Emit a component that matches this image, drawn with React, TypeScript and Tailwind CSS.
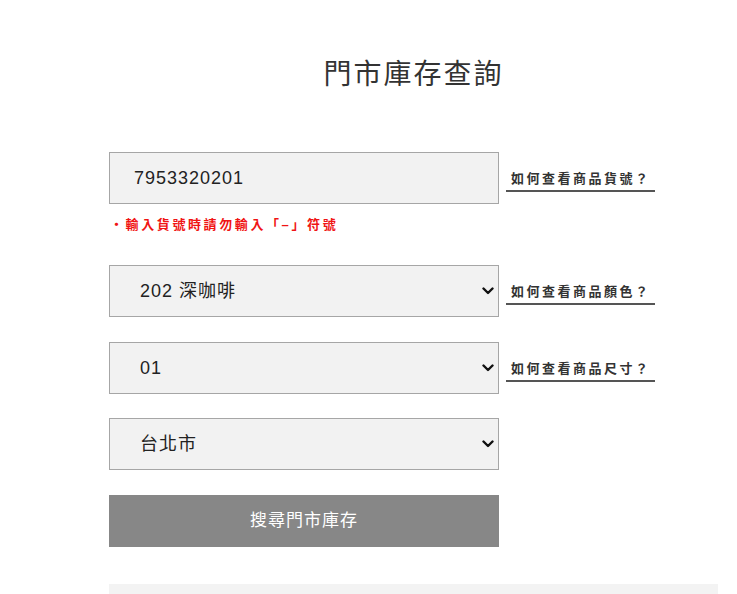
import React from 'react';

const FONT = '"Liberation Sans", "Noto Sans CJK TC", sans-serif';

function Chevron() {
  return (
    <svg
      width="12"
      height="8"
      viewBox="0 0 12 8"
      className="pointer-events-none absolute right-[5px] top-1/2 -translate-y-1/2"
    >
      <polyline points="1.5,1.5 6,6 10.5,1.5" fill="none" stroke="#111" strokeWidth="2.4" strokeLinejoin="round" strokeLinecap="round" />
    </svg>
  );
}

function HelpLink({ label }: { label: string }) {
  return (
    <a
      href="#"
      className="ml-[7px] mt-[6px] border-b-2 border-[#555] pl-[5px] pr-[4px] pb-[2px] text-[13px] font-bold leading-[18px] tracking-[2.5px] text-[#333]"
    >
      {label}
    </a>
  );
}

function SelectField({ value, options }: { value: string; options: string[] }) {
  return (
    <div className="relative h-[52px] w-[390px]">
      <select
        defaultValue={value}
        className="h-full w-full appearance-none border border-[#a6a6a6] bg-[#f2f2f2] pl-[30px] text-[18px] tracking-[1px] text-[#222] outline-none"
        style={{ fontFamily: FONT }}
      >
        {options.map((o) => (
          <option key={o} value={o}>
            {o}
          </option>
        ))}
      </select>
      <Chevron />
    </div>
  );
}

export default function App() {
  return (
    <div className="min-h-[594px] bg-white" style={{ fontFamily: FONT }}>
      <div className="ml-[109px] w-[609px] pt-[55px]">
        <h1 className="text-center text-[28px] leading-[40px] tracking-[2px] text-[#333]">門市庫存查詢</h1>

        <div className="mt-[57px] flex items-center">
          <input
            defaultValue="7953320201"
            className="h-[52px] w-[390px] border border-[#a6a6a6] bg-[#f2f2f2] pl-[24px] text-[18px] tracking-[1px] text-[#222] outline-none"
            style={{ fontFamily: FONT }}
          />
          <HelpLink label="如何查看商品貨號？" />
        </div>

        <p className="ml-[1px] mt-[11px] text-[13px] font-bold leading-[20px] tracking-[2.6px] text-[#f01414]">
          ・輸入貨號時請勿輸入「–」符號
        </p>

        <div className="mt-[30px] flex items-center">
          <SelectField value="202 深咖啡" options={['202 深咖啡', '101 黑色', '301 米白']} />
          <HelpLink label="如何查看商品顏色？" />
        </div>

        <div className="mt-[25px] flex items-center">
          <SelectField value="01" options={['01', '02', '03']} />
          <HelpLink label="如何查看商品尺寸？" />
        </div>

        <div className="mt-[24px] flex items-center">
          <SelectField value="台北市" options={['台北市', '新北市', '桃園市', '台中市', '高雄市']} />
        </div>

        <button className="mt-[25px] h-[52px] w-[390px] bg-[#878787] text-[17px] tracking-[1px] text-white">
          搜尋門市庫存
        </button>

        <div className="mt-[37px] h-[20px] w-[609px] bg-[#f3f3f3]" />
      </div>
    </div>
  );
}
